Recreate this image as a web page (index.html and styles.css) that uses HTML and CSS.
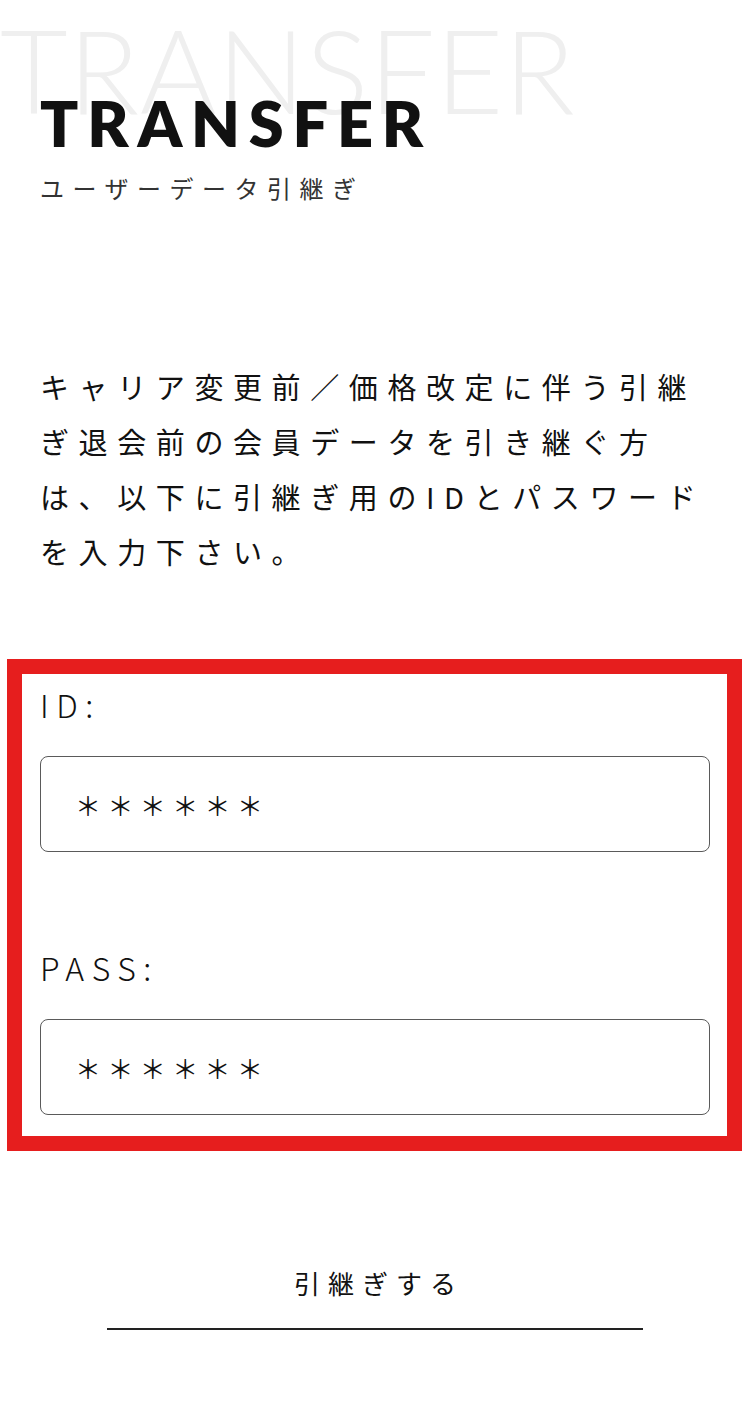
FILE: index.html
```html
<!DOCTYPE html>
<html lang="ja">
<head>
<meta charset="utf-8">
<title>TRANSFER</title>
<link rel="stylesheet" href="styles.css">
</head>
<body>
<div class="page">
  <header class="hero">
    <div class="hero-bg" aria-hidden="true">TRANSFER</div>
    <h1 class="hero-title">TRANSFER</h1>
    <p class="hero-sub">ユーザーデータ引継ぎ</p>
  </header>

  <p class="intro">キャリア変更前／価格改定に伴う引継ぎ退会前の会員データを引き継ぐ方は、以下に引継ぎ用のIDとパスワードを入力下さい。</p>

  <section class="form-box">
    <div class="field-group">
      <div class="label">ID:</div>
      <div class="field">＊＊＊＊＊＊</div>
    </div>
    <div class="field-group field-group-pass">
      <div class="label">PASS:</div>
      <div class="field">＊＊＊＊＊＊</div>
    </div>
  </section>

  <div class="submit-wrap">
    <a class="submit" href="#">引継ぎする</a>
  </div>
</div>
</body>
</html>
```

FILE: styles.css
```css
* { box-sizing: border-box; }

html, body {
  margin: 0;
  padding: 0;
  background: #fff;
}

body {
  font-family: "Noto Sans CJK JP", "Noto Sans", sans-serif;
  color: #111;
}

.page {
  width: 750px;
  min-height: 1402px;
  overflow: hidden;
}

.hero {
  position: relative;
  padding: 91px 0 0 40px;
}

.hero-bg {
  position: absolute;
  left: 0;
  top: 11px;
  font-family: "Lato", "Liberation Sans", sans-serif;
  font-weight: 300;
  font-size: 117px;
  line-height: 1;
  color: #efefef;
  white-space: nowrap;
  letter-spacing: 0.5px;
  z-index: 0;
}

.hero-title {
  position: relative;
  z-index: 1;
  margin: 0;
  font-family: "Lato", "Liberation Sans", sans-serif;
  font-weight: 800;
  font-size: 63px;
  line-height: 1;
  letter-spacing: 8.8px;
  color: #111;
}

.hero-sub {
  position: relative;
  z-index: 1;
  margin: 16px 0 0 0;
  font-size: 24px;
  line-height: 36px;
  letter-spacing: 8.5px;
  color: #333;
  font-weight: 400;
}

.intro {
  margin: 153px 40px 0 40px;
  font-size: 29px;
  line-height: 55px;
  letter-spacing: 9.6px;
  font-weight: 400;
  color: #111;
}

.form-box {
  margin: 80px 8px 0 7px;
  border: 15px solid #e61e1e;
  padding: 15px 17px 21px 18px;
}

.field-group-pass {
  margin-top: 100px;
}

.label {
  font-family: "Noto Sans CJK JP", "Noto Sans", sans-serif;
  font-weight: 300;
  font-size: 32px;
  line-height: 31px;
  letter-spacing: 7.5px;
  color: #111;
}

.field {
  margin-top: 36px;
  height: 96px;
  border: 1px solid #5a5a5a;
  border-radius: 8px;
  padding: 0 0 0 34px;
  display: flex;
  align-items: center;
  font-size: 26px;
  letter-spacing: 6.4px;
  color: #111;
}

.submit-wrap {
  display: flex;
  justify-content: center;
  margin-top: 112px;
}

.submit {
  display: block;
  width: 536px;
  text-align: center;
  text-decoration: none;
  color: #111;
  font-size: 26px;
  line-height: 40px;
  letter-spacing: 8px;
  padding: 0 0 25px 8px;
  border-bottom: 2px solid #222;
}
```
